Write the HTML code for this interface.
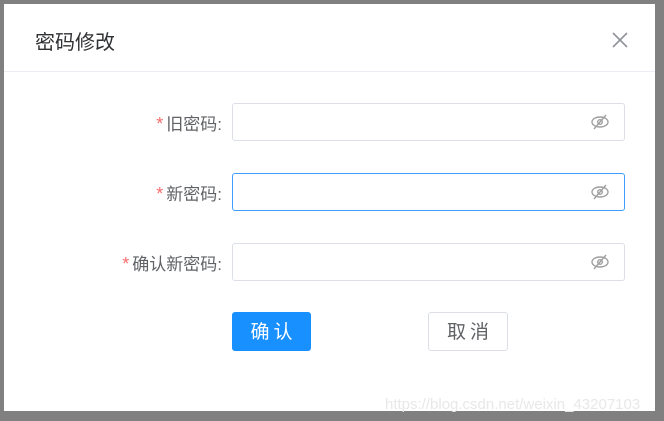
<!DOCTYPE html>
<html><head><meta charset="utf-8"><style>
body{margin:0;width:664px;height:421px;background:#808080;position:relative;overflow:hidden;font-family:"Liberation Sans","Noto Sans CJK SC",sans-serif}
.dlg{position:absolute;left:4px;top:4px;width:651px;height:407px;background:#fff}
.title{position:absolute;left:31px;top:22px;font-size:20px;color:#303133}
.x{position:absolute;left:607px;top:27px}
.hr{position:absolute;left:0;top:67px;width:651px;height:1px;background:#ebeef5}
.lbl{position:absolute;right:433px;font-size:17px;color:#606266;height:38px;line-height:42px;white-space:nowrap}
.lbl b{color:#f56c6c;font-weight:normal;margin-right:3px;font-size:18px}
.inp{position:absolute;left:228px;width:391px;height:36px;border:1px solid #dcdfe6;border-radius:3px}
.inp.f{border-color:#409eff}
.inp svg{position:absolute;right:14px;top:9px}
.btn{position:absolute;top:308px;height:39px;line-height:41px;text-align:center;font-size:19px;border-radius:3px;letter-spacing:4px;text-indent:4px;box-sizing:border-box}
.wm{position:absolute;left:385px;top:396px;font-size:15px;color:#e8e8e8;white-space:nowrap}
</style></head><body>
<div class="dlg">
<div class="title">密码修改</div>
<svg class="x" width="18" height="18" viewBox="0 0 18 18"><path d="M2 2L16 16M16 2L2 16" stroke="#909399" stroke-width="1.6"/></svg>
<div class="hr"></div>
<div class="lbl" style="top:99px"><b>*</b>旧密码:</div>
<div class="inp" style="top:99px"><svg width="20" height="18" viewBox="0 0 20 18"><ellipse cx="10" cy="9" rx="8" ry="5" fill="none" stroke="#a0a0a0" stroke-width="1.4"/><circle cx="10" cy="9" r="2.3" fill="none" stroke="#a0a0a0" stroke-width="1.4"/><path d="M4 16L16 2" stroke="#a0a0a0" stroke-width="1.4"/></svg></div>
<div class="lbl" style="top:169px"><b>*</b>新密码:</div>
<div class="inp f" style="top:169px"><svg width="20" height="18" viewBox="0 0 20 18"><ellipse cx="10" cy="9" rx="8" ry="5" fill="none" stroke="#a0a0a0" stroke-width="1.4"/><circle cx="10" cy="9" r="2.3" fill="none" stroke="#a0a0a0" stroke-width="1.4"/><path d="M4 16L16 2" stroke="#a0a0a0" stroke-width="1.4"/></svg></div>
<div class="lbl" style="top:239px"><b>*</b>确认新密码:</div>
<div class="inp" style="top:239px"><svg width="20" height="18" viewBox="0 0 20 18"><ellipse cx="10" cy="9" rx="8" ry="5" fill="none" stroke="#a0a0a0" stroke-width="1.4"/><circle cx="10" cy="9" r="2.3" fill="none" stroke="#a0a0a0" stroke-width="1.4"/><path d="M4 16L16 2" stroke="#a0a0a0" stroke-width="1.4"/></svg></div>
<div class="btn" style="left:228px;width:79px;background:#1890ff;color:#fff">确认</div>
<div class="btn" style="left:424px;width:80px;border:1px solid #dcdfe6;color:#606266;line-height:39px">取消</div>
</div>
<div class="wm">https://blog.csdn.net/weixin_43207103</div>
</body></html>
